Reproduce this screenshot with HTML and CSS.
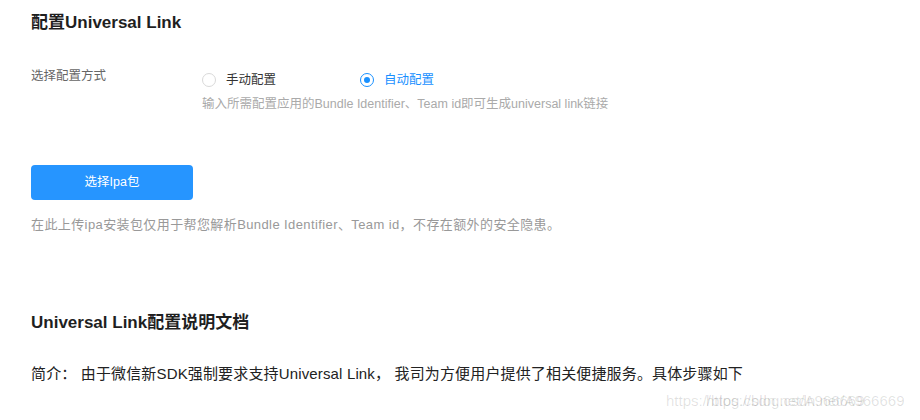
FILE: index.html
```html
<!DOCTYPE HTML>
<html>
	<head>
		<title>配置Universal Link</title>
		<meta charset="utf-8">
		<link rel="stylesheet" href="styles.css">
	</head>
	<body>
		<div id="main">
			<h2 class="title">配置Universal Link</h2>
			<div class="form-row">
				<div class="label">选择配置方式</div>
				<div class="field">
					<div class="radios">
						<label class="radio"><span class="dot"></span>手动配置</label>
						<label class="radio checked"><span class="dot"></span>自动配置</label>
					</div>
					<p class="hint">输入所需配置应用的Bundle Identifier、Team id即可生成universal link链接</p>
				</div>
			</div>
			<div class="upload">
				<div class="btn">选择Ipa包</div>
				<p class="tip">在此上传ipa安装包仅用于帮您解析Bundle Identifier、Team id，不存在额外的安全隐患。</p>
			</div>
			<h2 class="title doc">Universal Link配置说明文档</h2>
			<p class="intro">简介：&nbsp;由于微信新SDK强制要求支持Universal Link，&nbsp;我司为方便用户提供了相关便捷服务。具体步骤如下</p>
		</div>
		<div class="watermark"><span>https://blog.csdn.net/A966669</span><span class="w2">https://blog.csdn.net/A966669</span></div>
	</body>
</html>
```

FILE: styles.css
```css
html, body{
	margin: 0;
	height: 100%;
	background: #fff;
	font-family: "Liberation Sans", "Noto Sans CJK SC", sans-serif;
}
#main{
	padding: 0 0 0 31px;
}
.title{
	margin: 0;
	padding-top: 12px;
	font-size: 17px;
	font-weight: bold;
	color: #1f1f1f;
	line-height: 22px;
}
.form-row{
	display: flex;
	margin-top: 38px;
	font-size: 12.5px;
}
.form-row .label{
	width: 171px;
	margin-top: -4px;
	color: #666;
	line-height: 16px;
}
.radios{
	display: flex;
	line-height: 16px;
}
.radio{
	display: flex;
	align-items: center;
	width: 158px;
	color: #333;
}
.radio .dot{
	width: 12px;
	height: 12px;
	border: 1px solid #d9d9d9;
	border-radius: 50%;
	margin-right: 10px;
	position: relative;
}
.radio.checked{
	color: #1890ff;
}
.radio.checked .dot{
	border-color: #1890ff;
}
.radio.checked .dot::after{
	content: "";
	position: absolute;
	left: 3px;
	top: 3px;
	width: 6px;
	height: 6px;
	border-radius: 50%;
	background: #1890ff;
}
.hint{
	margin: 8px 0 0;
	color: #aaa;
	line-height: 16px;
}
.upload{
	margin-top: 53px;
}
.btn{
	width: 162px;
	height: 35px;
	line-height: 35px;
	text-align: center;
	background: #2695ff;
	color: #fff;
	font-size: 12.5px;
	border-radius: 4px;
	cursor: pointer;
}
.tip{
	margin: 16px 0 0;
	font-size: 13px;
	letter-spacing: 0.4px;
	color: #999;
	line-height: 18px;
}
.title.doc{
	padding-top: 78px;
}
.intro{
	margin: 30px 0 0;
	font-size: 15px;
	letter-spacing: 0.15px;
	color: #222;
	line-height: 20px;
}
.watermark{
	position: absolute;
	left: 666px;
	top: 392px;
	font-size: 15px;
	color: rgba(0,0,0,0.12);
}
.watermark .w2{
	position: absolute;
	left: 40px;
	top: 0;
}
```
